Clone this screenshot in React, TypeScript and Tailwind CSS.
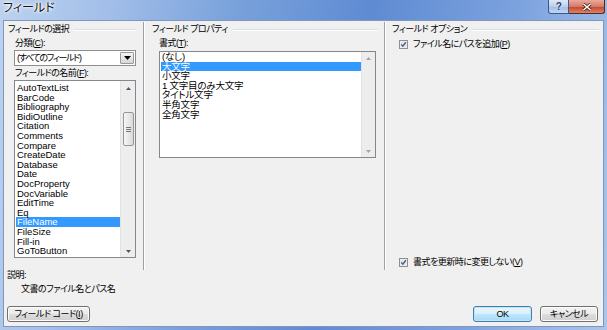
import React from "react";

const FONT =
  "font-['Liberation_Sans','Noto_Sans_CJK_JP',sans-serif] [font-feature-settings:'palt']";

const FIELDS = [
  "AutoTextList",
  "BarCode",
  "Bibliography",
  "BidiOutline",
  "Citation",
  "Comments",
  "Compare",
  "CreateDate",
  "Database",
  "Date",
  "DocProperty",
  "DocVariable",
  "EditTime",
  "Eq",
  "FileName",
  "FileSize",
  "Fill-in",
  "GoToButton",
];

const FORMATS = ["(なし)", "大文字", "小文字", "1 文字目のみ大文字", "タイトル文字", "半角文字", "全角文字"];

function Tri({ up, color }: { up: boolean; color: string }) {
  return (
    <svg width="5" height="3" viewBox="0 0 5 3" className="block">
      <path d={up ? "M0 3 L2.5 0 L5 3Z" : "M0 0 L2.5 3 L5 0Z"} fill={color} />
    </svg>
  );
}

function Check() {
  return (
    <svg width="9" height="9" viewBox="0 0 9 9" className="block shrink-0">
      <rect x="0.5" y="0.5" width="8" height="8" fill="#f6f6f6" stroke="#8e8f8f" />
      <rect x="1.5" y="1.5" width="6" height="6" fill="#e2e4e8" />
      <path d="M2.2 4.4 L3.8 6.2 L6.9 2.2" stroke="#4d5f8c" strokeWidth="1.4" fill="none" />
    </svg>
  );
}

function GroupHeader({ title, pad, right }: { title: string; pad: string; right: string }) {
  return (
    <div className={`h-[11px] flex items-center ${pad}`}>
      <span className="leading-[11px] whitespace-nowrap">{title}</span>
      <div className={`flex-1 ml-[5px] h-[2px] border-t border-[#d5dfe5] border-b border-b-white ${right}`} />
    </div>
  );
}

function VSep() {
  return <div className="w-[2px] mt-[1px] border-l border-[#a0a0a0] border-r border-r-white shrink-0" />;
}

function Btn({ children, w, def }: { children: React.ReactNode; w: string; def?: boolean }) {
  return (
    <div
      className={`${w} h-[16px] rounded-[3px] border flex items-center justify-center leading-none whitespace-nowrap ${
        def
          ? "border-[#3c7fb1] bg-[linear-gradient(#eaf6fd_0%,#d9f0fc_50%,#bee6fd_51%,#a7d9f5_100%)] shadow-[inset_0_0_0_1px_#c4e5f6]"
          : "border-[#707070] bg-[linear-gradient(#f2f2f2_0%,#ebebeb_50%,#dddddd_51%,#cfcfcf_100%)] shadow-[inset_0_0_0_1px_#fcfcfc]"
      }`}
    >
      {children}
    </div>
  );
}

export default function App() {
  return (
    <div
      className={`${FONT} w-[607px] h-[330px] flex flex-col overflow-hidden text-[9px] tracking-[-0.5px] text-black bg-[linear-gradient(100deg,#bcd2ef_0%,#a3bfe9_16%,#78a1db_36%,#5f8bd3_56%,#7ca2de_78%,#abc6ea_100%)]`}
    >
      {/* title bar */}
      <div className="h-[20px] shrink-0 flex items-start justify-between">
        <div className="pl-[3px] pt-[1px] text-[12px] leading-[14px] tracking-normal text-[#151515] [text-shadow:0_0_4px_#fff,0_0_3px_#fff,0_0_2px_#fff]">
          フィールド
        </div>
        <div className="flex mr-[2px]">
          <div className="w-[21px] h-[14px] rounded-bl-[3px] border border-t-0 border-[#3a5a8c] bg-[linear-gradient(#dde8f6,#b9cfee_50%,#9fbbe4_51%,#c2d6f1)] flex items-center justify-center">
            <span className="text-[10px] font-bold leading-none text-[#25406f] [text-shadow:0_0_2px_#fff]">?</span>
          </div>
          <div className="w-[36px] h-[14px] rounded-br-[3px] border border-t-0 border-l-0 border-[#5a2620] bg-[linear-gradient(#e9a99b,#d67a66_50%,#c3452f_51%,#d98566)] flex items-center justify-center">
            <svg width="10" height="8" viewBox="0 0 10 8">
              <path d="M1.5 1 L8.5 7 M8.5 1 L1.5 7" stroke="#4a1a14" strokeWidth="3" />
              <path d="M1.5 1 L8.5 7 M8.5 1 L1.5 7" stroke="#fff" strokeWidth="1.6" />
            </svg>
          </div>
        </div>
      </div>

      {/* content */}
      <div className="flex-1 mx-[3px] mb-[3px] bg-[#f0f0f0] border border-[#8096bb] flex flex-col">
        {/* columns */}
        <div className="h-[249px] flex shrink-0">
          {/* column 1 */}
          <div className="w-[139px] flex flex-col pt-[3px]">
            <GroupHeader title="フィールドの選択" pad="pl-[4px]" right="mr-[7px]" />
            <div className="mt-[3px] h-[10px] leading-[10px] pl-[11px]">
              分類(<span className="underline">C</span>):
            </div>
            <div className="mt-[2px] ml-[10px] w-[122px] h-[16px] bg-white border border-[#8e8f8f] flex items-center">
              <div className="flex-1 pl-[2px] leading-[12px] whitespace-nowrap tracking-[-1.3px]">(すべてのフィールド)</div>
              <div className="w-[14px] h-[12px] mr-[1px] rounded-[1px] border border-[#9a9a9a] bg-[linear-gradient(#f4f4f4,#e6e6e6_50%,#d6d6d6)] flex items-center justify-center">
                <svg width="7" height="4" viewBox="0 0 7 4" className="block">
                  <path d="M0 0 L3.5 4 L7 0Z" fill="#000" />
                </svg>
              </div>
            </div>
            <div className="mt-[2px] h-[10px] leading-[10px] pl-[11px]">
              フィールドの名前(<span className="underline">F</span>):
            </div>
            <div className="mt-[2px] ml-[10px] w-[122px] h-[178px] bg-white border border-[#828790] flex">
              <div className="flex-1 pt-[2px] text-[9.5px] tracking-normal">
                {FIELDS.map((f) => (
                  <div
                    key={f}
                    className={`ml-[1px] h-[9.6px] leading-[9.6px] pl-[1px] whitespace-nowrap ${
                      f === "FileName" ? "bg-[#3399ff] text-white" : ""
                    }`}
                  >
                    {f}
                  </div>
                ))}
              </div>
              <div className="w-[15px] bg-[#ededed] border-l border-[#e2e2e2] flex flex-col items-center">
                <div className="h-[14px] flex items-center justify-center">
                  <Tri up color="#555" />
                </div>
                <div className="mt-[17px] w-[11px] h-[34px] rounded-[2px] border border-[#979797] bg-[linear-gradient(90deg,#f6f6f6,#e8e8e8_50%,#d9d9d9)] flex flex-col items-center justify-center gap-[1px]">
                  <div className="w-[5px] h-[1px] bg-[#777]" />
                  <div className="w-[5px] h-[1px] bg-[#777]" />
                  <div className="w-[5px] h-[1px] bg-[#777]" />
                </div>
                <div className="flex-1" />
                <div className="h-[12px] flex items-center justify-center">
                  <Tri up={false} color="#555" />
                </div>
              </div>
            </div>
          </div>

          <VSep />

          {/* column 2 */}
          <div className="w-[239px] flex flex-col pt-[3px]">
            <GroupHeader title="フィールド プロパティ" pad="pl-[7px]" right="mr-[6px]" />
            <div className="mt-[3px] h-[10px] leading-[10px] pl-[14px]">
              書式(<span className="underline">T</span>):
            </div>
            <div className="mt-[3px] ml-[14px] w-[217px] h-[107px] bg-white border border-[#828790] flex">
              <div className="flex-1 text-[9.5px] tracking-[-0.2px]">
                {FORMATS.map((f) => (
                  <div
                    key={f}
                    className={`ml-[1px] h-[9.6px] leading-[9.6px] pl-[1px] whitespace-nowrap ${
                      f === "大文字" ? "bg-[#3399ff] text-white" : ""
                    }`}
                  >
                    {f}
                  </div>
                ))}
              </div>
              <div className="w-[14px] bg-[#ededed] border-l border-[#e2e2e2] flex flex-col items-center">
                <div className="h-[13px] flex items-center justify-center">
                  <Tri up color="#a3a3a3" />
                </div>
                <div className="flex-1" />
                <div className="h-[12px] flex items-center justify-center">
                  <Tri up={false} color="#a3a3a3" />
                </div>
              </div>
            </div>
          </div>

          <VSep />

          {/* column 3 */}
          <div className="flex-1 flex flex-col pt-[3px] pb-[3px]">
            <GroupHeader title="フィールド オプション" pad="pl-[6px]" right="mr-[4px]" />
            <div className="mt-[4px] h-[10px] pl-[13px] flex items-center gap-[5px]">
              <Check />
              <span className="leading-[10px] whitespace-nowrap">
                ファイル名にパスを追加(<span className="underline">P</span>)
              </span>
            </div>
            <div className="flex-1" />
            <div className="h-[10px] pl-[13px] flex items-center gap-[5px]">
              <Check />
              <span className="leading-[10px] whitespace-nowrap">
                書式を更新時に変更しない(<span className="underline">V</span>)
              </span>
            </div>
          </div>
        </div>

        {/* description */}
        <div className="h-[11px] leading-[11px] pl-[3px]">説明:</div>
        <div className="mt-[3px] h-[11px] leading-[11px] pl-[17px]">文書のファイル名とパス名</div>

        {/* buttons */}
        <div className="mt-auto mb-[4px] flex items-center">
          <div className="ml-[3px]">
            <Btn w="w-[83px]">
              フィールド コード(<span className="underline">I</span>)
            </Btn>
          </div>
          <div className="flex-1" />
          <Btn w="w-[59px]" def>
            OK
          </Btn>
          <div className="ml-[8px] mr-[5px]">
            <Btn w="w-[58px]">キャンセル</Btn>
          </div>
        </div>
      </div>
    </div>
  );
}
